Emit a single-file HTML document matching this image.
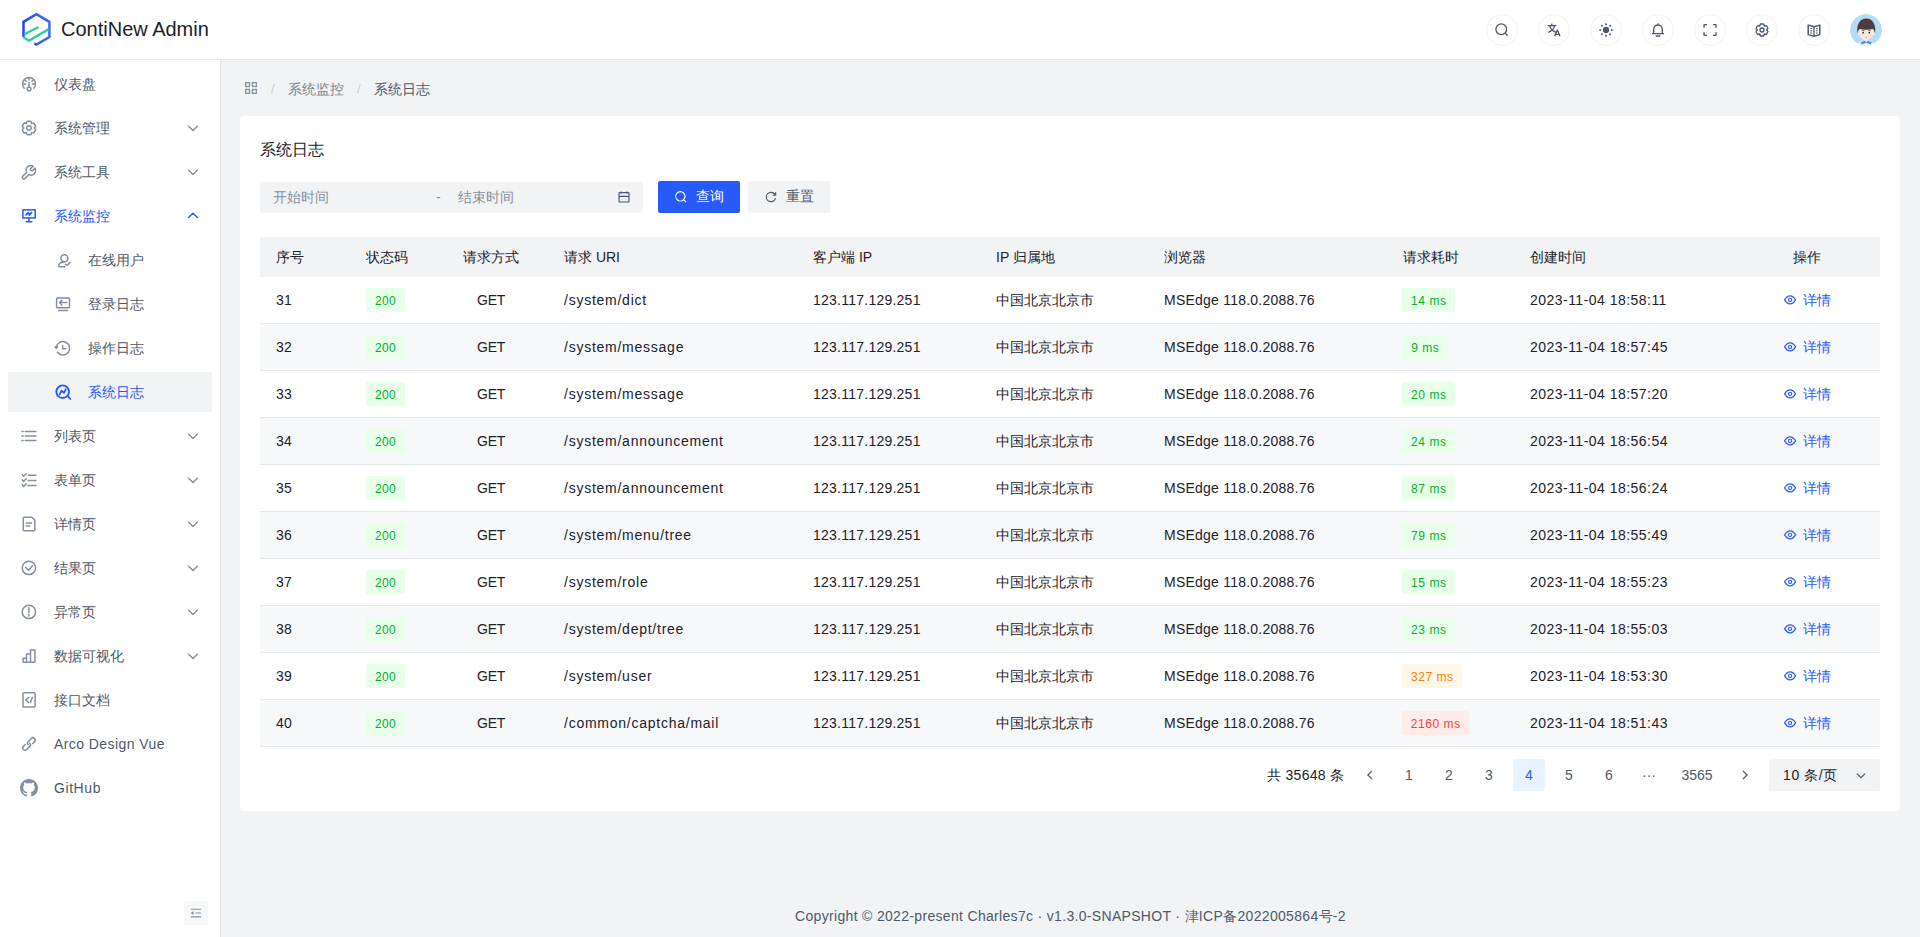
<!DOCTYPE html><html><head><meta charset="utf-8"><style>*{margin:0;padding:0;box-sizing:border-box}
html,body{width:1920px;height:937px;overflow:hidden;background:#f2f3f5;font-family:"Liberation Sans",sans-serif;font-size:14px;color:#1d2129}
.ic{display:inline-flex;font-style:normal}
svg{display:block}
.header{position:absolute;left:0;top:0;width:1920px;height:60px;background:#fff;border-bottom:1px solid #e5e6eb}
.logo{position:absolute;left:16px;top:8px}
.brand{position:absolute;left:61px;top:17px;font-size:20px;line-height:24px;color:#1d2129}
.nbtn{position:absolute;top:14px;width:32px;height:32px;border:1px solid #f2f3f5;border-radius:50%;display:flex;align-items:center;justify-content:center;color:#4e5969}
.avatar{position:absolute;left:1850px;top:14px;width:32px;height:32px;border-radius:50%;overflow:hidden}
.side{position:absolute;left:0;top:60px;width:221px;height:877px;background:#fff;border-right:1px solid #e5e6eb}
.mi{position:absolute;left:8px;width:204px;height:40px;color:#4e5969;border-radius:2px}
.mi .mic{position:absolute;left:6px;top:5px;color:#86909c}
.mi .mt{position:absolute;left:46px;top:0;line-height:40px}
.mi .arr{position:absolute;left:170px;top:5px;color:#86909c}
.mi.sub .mic{left:42px;top:5px}
.mi.sub .mt{left:80px}
.mi.act,.mi.act .mic,.mi.act .arr{color:#285afa}
.mi.sel{background:#f2f3f5}
.foldbtn{position:absolute;left:184px;top:841px;width:24px;height:24px;background:#f7f8fa;border-radius:2px;display:flex;align-items:center;justify-content:center;color:#86909c}
.main{position:absolute;left:221px;top:60px;width:1699px;height:877px}
.bc{position:absolute;left:0;top:0;width:100%;height:56px}
.bc .bci{position:absolute;left:24px;top:22px;color:#86909c}
.bc .sep{position:absolute;top:21px;line-height:16px;color:#c9cdd4;font-size:13px}
.bc .sep{margin-left:-221px}
.bc .bct{position:absolute;top:21px;line-height:16px;color:#7a8390;margin-left:-221px}
.bc .bct.cur{color:#4e5969}
.card{position:absolute;left:19px;top:56px;width:1660px;height:695px;background:#fff;border-radius:4px}
.ctitle{position:absolute;left:20px;top:23px;font-size:16px;line-height:22px;color:#1d2129}
.picker{position:absolute;left:20px;top:66px;width:383px;height:31px;background:#f2f3f5;border-radius:2px}
.picker .ph{position:absolute;top:-1px;line-height:32px;color:#86909c}
.picker .dash{position:absolute;left:176px;top:-1px;line-height:32px;color:#86909c}
.picker .calic{position:absolute;left:357px;top:8px;color:#4e5969}
.btn{position:absolute;top:65px;width:82px;height:32px;border-radius:2px;display:flex;align-items:center;justify-content:center;gap:8px}
.btn.pri{left:418px;background:#285afa;color:#fff}
.btn.sec{left:508px;background:#f2f3f5;color:#4e5969}
.tbl{position:absolute;left:20px;top:121px;width:1620px;height:510px}
.thead{position:absolute;left:0;top:0;width:1620px;height:40px;background:#f2f3f5}
.th{position:absolute;top:0;line-height:40px;color:#1d2129;white-space:nowrap}
.tr{position:absolute;left:0;width:1620px;height:47px;border-bottom:1px solid #e5e6eb;background:#fff}
.tr.st{background:#f7f8fa}
.td{position:absolute;top:0;line-height:46px;white-space:nowrap;color:#1d2129}
.td.get{text-align:center}
.tag{position:absolute;top:11px;height:24px;line-height:26px;padding:0;text-align:center;font-size:12px;border-radius:2px;white-space:nowrap}
.tag.ms{letter-spacing:0.55px;text-indent:0.55px}
.tag.g{background:#e8ffea;color:#00b42a}
.tag.o{background:#fff7e8;color:#ff7d00}
.tag.r{background:#ffece8;color:#f53f3f}
.td.op{color:#285afa;display:flex;align-items:center;height:46px}
.td.op svg{margin-right:5px}
.td.op b{font-weight:normal}
.pg{position:absolute;left:0;top:0;width:100%;height:100%;margin-left:-240px}
.pg .total{position:absolute;left:1267px;top:643px;line-height:32px;color:#1d2129}
.pi{position:absolute;top:643px;height:32px;line-height:32px;text-align:center;color:#4e5969;border-radius:2px;width:32px;display:flex;align-items:center;justify-content:center}
.pi.on{background:#e8f3ff;color:#285afa}
.psel{position:absolute;left:1769px;top:643px;width:111px;height:32px;background:#f2f3f5;border-radius:2px;color:#1d2129}
.psel .pst{position:absolute;left:14px;top:0;line-height:32px;letter-spacing:0.6px}
.psel .psa{position:absolute;left:86px;top:11px;color:#4e5969}
.foot{position:absolute;left:0;top:845px;width:1699px;text-align:center;line-height:22px;color:#4e5969}

.td.uri{letter-spacing:0.75px}
.td.ip{letter-spacing:0.24px}
.td.br{letter-spacing:0.23px}
.td.dt{letter-spacing:0.47px}
.td.get{letter-spacing:-0.3px}
.foot{letter-spacing:0.32px}
.pg .total{letter-spacing:0.3px}

</style></head><body>
<div class="header">
<svg class="logo" width="44" height="44" viewBox="16 8 44 44"><defs><linearGradient id="lg" x1="0" y1="0" x2="1" y2="0"><stop offset="0" stop-color="#1f48fb"/><stop offset="1" stop-color="#3b6ef3"/></linearGradient></defs><polyline points="34.3,43.4 36.45,44.6 49.4,37.0 49.4,21.8 36.45,14.2 23.5,21.8 23.5,37.0" fill="none" stroke="url(#lg)" stroke-width="2.5" stroke-linejoin="miter"/><polyline points="23.3,37.3 29.1,40.6 48.4,29.4" fill="none" stroke="#2ecfa5" stroke-width="2.4"/><line x1="24.4" y1="34.2" x2="38.4" y2="27.1" stroke="#2ecfa5" stroke-width="2.4"/></svg>
<div class="brand">ContiNew Admin</div>
<div class="nbtn" style="left:1486px"><svg width="16" height="16" viewBox="0 0 48 48" fill="none" stroke="currentColor" stroke-width="4" ><path d="M33.072 33.071c6.248-6.248 6.248-16.379 0-22.627-6.249-6.249-16.38-6.249-22.628 0-6.248 6.248-6.248 16.379 0 22.627 6.248 6.248 16.38 6.248 22.628 0Zm0 0 8.485 8.485"/></svg></div>
<div class="nbtn" style="left:1538px"><svg width="16" height="16" viewBox="0 0 48 48" fill="none" stroke="currentColor" stroke-width="4" ><path d="m42 43-2.385-6M26 43l2.384-6m11.231 0-.795-2-4.18-10h-1.28l-4.181 10-.795 2m11.231 0h-11.23M17 5l1 5M5 11h26M11 11s1.889 7.826 6.611 12.174C22.333 27.522 30 31 30 31"/><path d="M25.914 11s-1.889 7.826-6.611 12.174C14.58 27.522 6.914 31 6.914 31"/></svg></div>
<div class="nbtn" style="left:1590px"><svg width="16" height="16" viewBox="0 0 48 48" fill="none" stroke="currentColor" stroke-width="4" ><circle cx="24" cy="24" r="9.5" fill="currentColor" stroke="none"/><g fill="currentColor" stroke="none"><circle cx="24" cy="6.5" r="3"/><circle cx="24" cy="41.5" r="3"/><circle cx="6.5" cy="24" r="3"/><circle cx="41.5" cy="24" r="3"/><circle cx="11.6" cy="11.6" r="3"/><circle cx="36.4" cy="36.4" r="3"/><circle cx="36.4" cy="11.6" r="3"/><circle cx="11.6" cy="36.4" r="3"/></g></svg></div>
<div class="nbtn" style="left:1642px"><svg width="16" height="16" viewBox="0 0 48 48" fill="none" stroke="currentColor" stroke-width="4" ><path d="M24 9c7.18 0 13 5.82 13 13v13H11V22c0-7.18 5.82-13 13-13Zm0 0V4M6 35h36m-25 7h14"/></svg></div>
<div class="nbtn" style="left:1694px"><svg width="16" height="16" viewBox="0 0 48 48" fill="none" stroke="currentColor" stroke-width="4" ><path d="M42 17V9a1 1 0 0 0-1-1h-8M6 17V9a1 1 0 0 1 1-1h8m27 23v8a1 1 0 0 1-1 1h-8M6 31v8a1 1 0 0 0 1 1h8"/></svg></div>
<div class="nbtn" style="left:1746px"><svg width="16" height="16" viewBox="0 0 48 48" fill="none" stroke="currentColor" stroke-width="4" ><path d="M18.797 6.732A1 1 0 0 1 19.76 6h8.48a1 1 0 0 1 .964.732l1.285 4.628a1 1 0 0 0 1.213.7l4.651-1.2a1 1 0 0 1 1.116.468l4.24 7.344a1 1 0 0 1-.153 1.2L38.193 23.3a1 1 0 0 0 0 1.402l3.364 3.427a1 1 0 0 1 .153 1.2l-4.24 7.344a1 1 0 0 1-1.116.468l-4.65-1.2a1 1 0 0 0-1.214.7l-1.285 4.628a1 1 0 0 1-.964.732h-8.48a1 1 0 0 1-.963-.732L17.51 36.64a1 1 0 0 0-1.213-.7l-4.65 1.2a1 1 0 0 1-1.116-.468l-4.24-7.344a1 1 0 0 1 .153-1.2L9.809 24.7a1 1 0 0 0 0-1.402l-3.364-3.427a1 1 0 0 1-.153-1.2l4.24-7.344a1 1 0 0 1 1.116-.468l4.65 1.2a1 1 0 0 0 1.213-.7l1.286-4.628Z"/><path d="M30 24a6 6 0 1 1-12 0 6 6 0 0 1 12 0Z"/></svg></div>
<div class="nbtn" style="left:1798px"><svg width="16" height="16" viewBox="0 0 16 16" fill="none" stroke="currentColor" stroke-width="1.5" stroke-linejoin="round"><path d="M2.2 3.1 8 4.8 13.8 3.1V12.6L8 14.2 2.2 12.6Z"/><path d="M8 4.8V14.2" stroke-width="1.3"/><path d="M4.3 6.6H6M4.3 8.8H6M4.3 11H6M10 6.6H11.7M10 8.8H11.7M10 11H11.7" stroke-width="1"/></svg></div>
<div class="avatar"><svg width="32" height="32" viewBox="0 0 32 32"><circle cx="16" cy="16" r="16" fill="#b3dcf8"/><path d="M5 32Q7 27.5 16.25 27.5Q25.5 27.5 27.5 32Z" fill="#eaf5fd"/><rect x="14.3" y="23.5" width="3.9" height="5" fill="#fbe3d5"/><path d="M10.5 28.6 15 26.7 16.25 28.6 17.5 26.7 22 28.6 20.6 30.4 16.25 28.8 11.9 30.4Z" fill="#4a8ff0"/><circle cx="8.9" cy="19.8" r="1.3" fill="#fbe3d5"/><circle cx="23.6" cy="19.8" r="1.3" fill="#fbe3d5"/><ellipse cx="16.25" cy="18" rx="7.4" ry="8.3" fill="#fde9de"/><path d="M7.4 19.5C6.2 10.5 10 4.5 16.25 4.5 22.5 4.5 26.3 10.5 25.1 19.5 24.5 17 24 15.8 23.1 15.1 19.5 16.1 13 16.1 9.4 15.1 8.6 15.8 8 17 7.4 19.5Z" fill="#4e3b3f"/><path d="M11.8 16.6h2.6M18.1 16.6h2.6" stroke="#4e3b3f" stroke-width="0.7"/><circle cx="13.2" cy="18.7" r="0.85" fill="#3a2a2a"/><circle cx="19.3" cy="18.7" r="0.85" fill="#3a2a2a"/><circle cx="11.9" cy="21" r="1.1" fill="#f9d2d0"/><circle cx="20.6" cy="21" r="1.1" fill="#f9d2d0"/><ellipse cx="16.25" cy="23.2" rx="0.9" ry="0.55" fill="#ee8b8b"/></svg></div>
</div>
<div class="side">
<div class="mi" style="top:4px">
<i class="ic mic"><svg width="30" height="30" viewBox="0 0 30 30" fill="none" stroke="currentColor" stroke-width="1.5" stroke-linecap="round" stroke-linejoin="round"><path d="M10.2 19.3A6.5 6.5 0 1 1 19.8 19.3"/><path d="M15 8.6v2.2M9.3 15.1h2.4M18.4 15h2.4M10.6 10.9l1.5 1.4M19.4 10.9l-1.5 1.4M15 13.2v4.8"/><circle cx="15" cy="19.9" r="1.9"/></svg></i>
<span class="mt" style="letter-spacing:0px">仪表盘</span>
</div>
<div class="mi" style="top:48px">
<i class="ic mic"><svg width="30" height="30" viewBox="0 0 30 30" fill="none" stroke="currentColor" stroke-width="1.5" stroke-linecap="round" stroke-linejoin="round"><g transform="translate(6 6) scale(0.375)" stroke-width="4"><path d="M18.797 6.732A1 1 0 0 1 19.76 6h8.48a1 1 0 0 1 .964.732l1.285 4.628a1 1 0 0 0 1.213.7l4.651-1.2a1 1 0 0 1 1.116.468l4.24 7.344a1 1 0 0 1-.153 1.2L38.193 23.3a1 1 0 0 0 0 1.402l3.364 3.427a1 1 0 0 1 .153 1.2l-4.24 7.344a1 1 0 0 1-1.116.468l-4.65-1.2a1 1 0 0 0-1.214.7l-1.285 4.628a1 1 0 0 1-.964.732h-8.48a1 1 0 0 1-.963-.732L17.51 36.64a1 1 0 0 0-1.213-.7l-4.65 1.2a1 1 0 0 1-1.116-.468l-4.24-7.344a1 1 0 0 1 .153-1.2L9.809 24.7a1 1 0 0 0 0-1.402l-3.364-3.427a1 1 0 0 1-.153-1.2l4.24-7.344a1 1 0 0 1 1.116-.468l4.65 1.2a1 1 0 0 0 1.213-.7l1.286-4.628Z"/><path d="M30 24a6 6 0 1 1-12 0 6 6 0 0 1 12 0Z"/></g></svg></i>
<span class="mt" style="letter-spacing:0px">系统管理</span>
<i class="ic arr"><svg width="30" height="30" viewBox="0 0 30 30" fill="none" stroke="currentColor" stroke-width="1.4" stroke-linecap="round" stroke-linejoin="round"><path d="M10.6 13.3 14.9 17.4 19.4 13.3"/></svg></i>
</div>
<div class="mi" style="top:92px">
<i class="ic mic"><svg width="30" height="30" viewBox="0 0 30 30" fill="none" stroke="currentColor" stroke-width="1.5" stroke-linecap="round" stroke-linejoin="round"><path d="M19.2 9.1C16.8 7.9 13.6 8.8 12.5 11.3 11.9 12.7 12 14.1 12.7 15.3L8.6 19.4C8.1 19.9 8.1 20.6 8.6 21.1L9.1 21.6C9.6 22.1 10.3 22.1 10.8 21.6L14.9 17.5C16 18.2 17.5 18.4 18.9 17.8 21.4 16.8 22.3 13.6 21.1 11.1L18.8 13.4C18.3 13.9 17.6 13.9 17.1 13.4L16.8 13.1C16.3 12.6 16.3 11.9 16.8 11.4Z"/></svg></i>
<span class="mt" style="letter-spacing:0px">系统工具</span>
<i class="ic arr"><svg width="30" height="30" viewBox="0 0 30 30" fill="none" stroke="currentColor" stroke-width="1.4" stroke-linecap="round" stroke-linejoin="round"><path d="M10.6 13.3 14.9 17.4 19.4 13.3"/></svg></i>
</div>
<div class="mi act" style="top:136px">
<i class="ic mic"><svg width="30" height="30" viewBox="0 0 30 30" fill="none" stroke="currentColor" stroke-width="1.5" stroke-linecap="round" stroke-linejoin="round"><rect x="8.9" y="8.9" width="12.3" height="8" stroke-linejoin="miter"/><path d="M14.9 17.2V20.6M12.2 20.8H17.9"/><path d="M12 13.9 14.2 11.6 15.5 14 17.6 11.6" stroke-width="1.7"/></svg></i>
<span class="mt" style="letter-spacing:0px">系统监控</span>
<i class="ic arr"><svg width="30" height="30" viewBox="0 0 30 30" fill="none" stroke="currentColor" stroke-width="1.4" stroke-linecap="round" stroke-linejoin="round"><path d="M10.6 16.5 14.9 12.3 19.4 16.5"/></svg></i>
</div>
<div class="mi sub" style="top:180px">
<i class="ic mic"><svg width="30" height="30" viewBox="0 0 30 30" fill="none" stroke="currentColor" stroke-width="1.5" stroke-linecap="round" stroke-linejoin="round"><circle cx="14.4" cy="13.2" r="3.5"/><path d="M14.8 21.7H10.1Q8.6 21.7 8.8 20.4Q9.4 17.3 14.2 17.1M15.4 19.2 17 20.5 19.9 17.6"/></svg></i>
<span class="mt" style="letter-spacing:0px">在线用户</span>
</div>
<div class="mi sub" style="top:224px">
<i class="ic mic"><svg width="30" height="30" viewBox="0 0 30 30" fill="none" stroke="currentColor" stroke-width="1.5" stroke-linecap="round" stroke-linejoin="round"><rect x="6.6" y="8.9" width="12.9" height="9.8" rx="0.8"/><path d="M8.5 21.5H17.5M9.6 13.6H16.8M11.8 11.4 9.5 13.6 11.8 16"/></svg></i>
<span class="mt" style="letter-spacing:0px">登录日志</span>
</div>
<div class="mi sub" style="top:268px">
<i class="ic mic"><svg width="30" height="30" viewBox="0 0 30 30" fill="none" stroke="currentColor" stroke-width="1.5" stroke-linecap="round" stroke-linejoin="round"><path d="M7.5 19.3A6.7 6.7 0 1 0 6.3 14.3"/><path d="M5.2 13.7 6.3 15.2 7.7 14M12.6 12.6V15.8H15.7"/></svg></i>
<span class="mt" style="letter-spacing:0px">操作日志</span>
</div>
<div class="mi sub act sel" style="top:312px">
<i class="ic mic"><svg width="30" height="30" viewBox="0 0 30 30" fill="none" stroke="currentColor" stroke-width="1.5" stroke-linecap="round" stroke-linejoin="round"><circle cx="12.65" cy="14.7" r="6.3" stroke-width="1.9"/><path d="M17.6 19.2 20.3 21.9M9.6 17.4 11.5 13.6 14.1 15.8 15.7 12.3" stroke-width="1.8"/></svg></i>
<span class="mt" style="letter-spacing:0px">系统日志</span>
</div>
<div class="mi" style="top:356px">
<i class="ic mic"><svg width="30" height="30" viewBox="0 0 30 30" fill="none" stroke="currentColor" stroke-width="1.5" stroke-linecap="round" stroke-linejoin="round"><path d="M11.2 10.4H21.9M11.2 14.9H21.9M11.2 19.4H21.9M7.9 10.4H9.2M7.9 14.9H9.2M7.9 19.4H9.2"/></svg></i>
<span class="mt" style="letter-spacing:0px">列表页</span>
<i class="ic arr"><svg width="30" height="30" viewBox="0 0 30 30" fill="none" stroke="currentColor" stroke-width="1.4" stroke-linecap="round" stroke-linejoin="round"><path d="M10.6 13.3 14.9 17.4 19.4 13.3"/></svg></i>
</div>
<div class="mi" style="top:400px">
<i class="ic mic"><svg width="30" height="30" viewBox="0 0 30 30" fill="none" stroke="currentColor" stroke-width="1.5" stroke-linecap="round" stroke-linejoin="round"><path d="M14.1 10.2H21.9M14.1 15.4H21.9M14.1 20.6H21.9M8.2 9.6 9.6 11.2 12.3 8.7M8.2 14.7 9.6 16.3 12.3 13.8M8.2 19.8 9.6 21.4 12.3 18.9"/></svg></i>
<span class="mt" style="letter-spacing:0px">表单页</span>
<i class="ic arr"><svg width="30" height="30" viewBox="0 0 30 30" fill="none" stroke="currentColor" stroke-width="1.4" stroke-linecap="round" stroke-linejoin="round"><path d="M10.6 13.3 14.9 17.4 19.4 13.3"/></svg></i>
</div>
<div class="mi" style="top:444px">
<i class="ic mic"><svg width="30" height="30" viewBox="0 0 30 30" fill="none" stroke="currentColor" stroke-width="1.5" stroke-linecap="round" stroke-linejoin="round"><path d="M10.3 8.3H17.9L20.8 11.1V20.8A1 1 0 0 1 19.8 21.8H10.3A1 1 0 0 1 9.3 20.8V9.3A1 1 0 0 1 10.3 8.3Z"/><path d="M12.3 13.9H17.6M12.3 17H15.7"/></svg></i>
<span class="mt" style="letter-spacing:0px">详情页</span>
<i class="ic arr"><svg width="30" height="30" viewBox="0 0 30 30" fill="none" stroke="currentColor" stroke-width="1.4" stroke-linecap="round" stroke-linejoin="round"><path d="M10.6 13.3 14.9 17.4 19.4 13.3"/></svg></i>
</div>
<div class="mi" style="top:488px">
<i class="ic mic"><svg width="30" height="30" viewBox="0 0 30 30" fill="none" stroke="currentColor" stroke-width="1.5" stroke-linecap="round" stroke-linejoin="round"><circle cx="14.9" cy="14.9" r="6.7"/><path d="M11.5 14.2 14.4 17.2 18.6 12.6"/></svg></i>
<span class="mt" style="letter-spacing:0px">结果页</span>
<i class="ic arr"><svg width="30" height="30" viewBox="0 0 30 30" fill="none" stroke="currentColor" stroke-width="1.4" stroke-linecap="round" stroke-linejoin="round"><path d="M10.6 13.3 14.9 17.4 19.4 13.3"/></svg></i>
</div>
<div class="mi" style="top:532px">
<i class="ic mic"><svg width="30" height="30" viewBox="0 0 30 30" fill="none" stroke="currentColor" stroke-width="1.5" stroke-linecap="round" stroke-linejoin="round"><circle cx="14.9" cy="14.9" r="6.7"/><path d="M14.9 10.8V15.6M14.9 17.4V19"/></svg></i>
<span class="mt" style="letter-spacing:0px">异常页</span>
<i class="ic arr"><svg width="30" height="30" viewBox="0 0 30 30" fill="none" stroke="currentColor" stroke-width="1.4" stroke-linecap="round" stroke-linejoin="round"><path d="M10.6 13.3 14.9 17.4 19.4 13.3"/></svg></i>
</div>
<div class="mi" style="top:576px">
<i class="ic mic"><svg width="30" height="30" viewBox="0 0 30 30" fill="none" stroke="currentColor" stroke-width="1.5" stroke-linecap="round" stroke-linejoin="round"><path d="M9.1 21.2H20.9V8.9H16.5V21.2M16.5 13.1H12.5V21.2M12.5 17.2H9.1V21.2"/></svg></i>
<span class="mt" style="letter-spacing:0px">数据可视化</span>
<i class="ic arr"><svg width="30" height="30" viewBox="0 0 30 30" fill="none" stroke="currentColor" stroke-width="1.4" stroke-linecap="round" stroke-linejoin="round"><path d="M10.6 13.3 14.9 17.4 19.4 13.3"/></svg></i>
</div>
<div class="mi" style="top:620px">
<i class="ic mic"><svg width="30" height="30" viewBox="0 0 30 30" fill="none" stroke="currentColor" stroke-width="1.5" stroke-linecap="round" stroke-linejoin="round"><rect x="9" y="7.8" width="12.1" height="14.3" rx="0.8"/><path d="M14.6 12.5 11.7 14.9 14.6 17.5M18.3 12.5 16.5 17.5"/></svg></i>
<span class="mt" style="letter-spacing:0px">接口文档</span>
</div>
<div class="mi" style="top:664px">
<i class="ic mic"><svg width="30" height="30" viewBox="0 0 30 30" fill="none" stroke="currentColor" stroke-width="1.5" stroke-linecap="round" stroke-linejoin="round"><g transform="translate(6 6) scale(0.375)" stroke-width="4"><path d="m14.1 25.414-4.95 4.95a6 6 0 0 0 8.486 8.485l8.485-8.485a6 6 0 0 0 0-8.485m7.779.707 4.95-4.95a6 6 0 1 0-8.486-8.485l-8.485 8.485a6 6 0 0 0 0 8.485"/></g></svg></i>
<span class="mt" style="letter-spacing:0.43px">Arco Design Vue</span>
</div>
<div class="mi" style="top:708px">
<i class="ic mic"><svg width="30" height="30" viewBox="0 0 30 30" fill="currentColor"><g transform="translate(6 5.9) scale(1.125)"><path d="M8 0C3.58 0 0 3.58 0 8c0 3.54 2.29 6.53 5.47 7.59.4.07.55-.17.55-.38 0-.19-.01-.82-.01-1.49-2.01.37-2.53-.49-2.69-.94-.09-.23-.48-.94-.82-1.13-.28-.15-.68-.52-.01-.53.63-.01 1.08.58 1.23.82.72 1.21 1.87.87 2.33.66.07-.52.28-.87.51-1.07-1.78-.2-3.64-.89-3.64-3.95 0-.87.31-1.59.82-2.15-.08-.2-.36-1.02.08-2.12 0 0 .67-.21 2.2.82.64-.18 1.32-.27 2-.27.68 0 1.36.09 2 .27 1.53-1.04 2.2-.82 2.2-.82.44 1.1.16 1.92.08 2.12.51.56.82 1.27.82 2.15 0 3.07-1.87 3.75-3.65 3.95.29.25.54.73.54 1.48 0 1.07-.01 1.93-.01 2.2 0 .21.15.46.55.38A8.013 8.013 0 0016 8c0-4.42-3.58-8-8-8z"/></g></svg></i>
<span class="mt" style="letter-spacing:0.57px">GitHub</span>
</div>
<div class="foldbtn"><svg width="14" height="14" viewBox="0 0 48 48" fill="none" stroke="currentColor" stroke-width="4" ><path d="M42 11H6M42 24H22M42 37H6M13.66 26.912l-4.82-3.118 4.82-3.118v6.236Z"/></svg></div>
</div>
<div class="main">
<div class="bc"><i class="ic bci"><svg width="12" height="12" viewBox="0 0 12 12" fill="none" stroke="currentColor" stroke-width="1.3"><rect x="0.65" y="0.65" width="3.9" height="3.9"/><rect x="7.45" y="0.65" width="3.9" height="3.9"/><rect x="0.65" y="7.45" width="3.9" height="3.9"/><rect x="7.45" y="7.45" width="3.9" height="3.9"/></svg></i><span class="sep" style="left:271px">/</span><span class="bct" style="left:288px">系统监控</span><span class="sep" style="left:357px">/</span><span class="bct cur" style="left:374px">系统日志</span></div>
<div class="card">
<div class="ctitle">系统日志</div>
<div class="picker"><span class="ph" style="left:13px">开始时间</span><span class="dash">-</span><span class="ph" style="left:198px">结束时间</span><i class="ic calic"><svg width="14" height="14" viewBox="0 0 48 48" fill="none" stroke="currentColor" stroke-width="4" ><path d="M7 22h34M14 5v8m20-8v8M8 41h32a1 1 0 0 0 1-1V10a1 1 0 0 0-1-1H8a1 1 0 0 0-1 1v30a1 1 0 0 0 1 1Z"/></svg></i></div>
<div class="btn pri"><svg width="14" height="14" viewBox="0 0 48 48" fill="none" stroke="currentColor" stroke-width="4" ><path d="M33.072 33.071c6.248-6.248 6.248-16.379 0-22.627-6.249-6.249-16.38-6.249-22.628 0-6.248 6.248-6.248 16.379 0 22.627 6.248 6.248 16.38 6.248 22.628 0Zm0 0 8.485 8.485"/></svg><span>查询</span></div>
<div class="btn sec"><svg width="14" height="14" viewBox="0 0 48 48" fill="none" stroke="currentColor" stroke-width="4" ><path d="M38.837 18C36.463 12.136 30.715 8 24 8 15.163 8 8 15.163 8 24s7.163 16 16 16c7.455 0 13.72-5.1 15.496-12M40 8v10H30"/></svg><span>重置</span></div>
<div class="tbl">
<div class="thead">
<span class="th" style="left:16px">序号</span>
<span class="th" style="left:106px">状态码</span>
<span class="th" style="left:203px">请求方式</span>
<span class="th" style="left:304px">请求 URI</span>
<span class="th" style="left:553px">客户端 IP</span>
<span class="th" style="left:736px">IP 归属地</span>
<span class="th" style="left:904px">浏览器</span>
<span class="th" style="left:1143px">请求耗时</span>
<span class="th" style="left:1270px">创建时间</span>
<span class="th" style="left:1533px">操作</span>
</div>
<div class="tr" style="top:40px">
<span class="td" style="left:16px;letter-spacing:0.3px">31</span>
<span class="tag g" style="left:106px;width:39px;letter-spacing:0.3px">200</span>
<span class="td get" style="left:180px;width:102px">GET</span>
<span class="td uri" style="left:304px">/system/dict</span>
<span class="td ip" style="left:553px">123.117.129.251</span>
<span class="td" style="left:736px">中国北京北京市</span>
<span class="td br" style="left:904px">MSEdge 118.0.2088.76</span>
<span class="tag g ms" style="left:1142px;width:53px">14 ms</span>
<span class="td dt" style="left:1270px">2023-11-04 18:58:11</span>
<span class="td op" style="left:1522px"><svg width="16" height="16" viewBox="0 0 16 16" fill="none" stroke="currentColor" stroke-width="1.2"><path d="M2.6 7.9C4.3 5 6 3.95 8.1 3.95 10.2 3.95 11.9 5 13.6 7.9 11.9 10.8 10.2 11.85 8.1 11.85 6 11.85 4.3 10.8 2.6 7.9Z"/><circle cx="8.1" cy="7.9" r="1.6" stroke-width="1.1"/></svg><b>详情</b></span>
</div>
<div class="tr st" style="top:87px">
<span class="td" style="left:16px;letter-spacing:0.3px">32</span>
<span class="tag g" style="left:106px;width:39px;letter-spacing:0.3px">200</span>
<span class="td get" style="left:180px;width:102px">GET</span>
<span class="td uri" style="left:304px">/system/message</span>
<span class="td ip" style="left:553px">123.117.129.251</span>
<span class="td" style="left:736px">中国北京北京市</span>
<span class="td br" style="left:904px">MSEdge 118.0.2088.76</span>
<span class="tag g ms" style="left:1142px;width:46px">9 ms</span>
<span class="td dt" style="left:1270px">2023-11-04 18:57:45</span>
<span class="td op" style="left:1522px"><svg width="16" height="16" viewBox="0 0 16 16" fill="none" stroke="currentColor" stroke-width="1.2"><path d="M2.6 7.9C4.3 5 6 3.95 8.1 3.95 10.2 3.95 11.9 5 13.6 7.9 11.9 10.8 10.2 11.85 8.1 11.85 6 11.85 4.3 10.8 2.6 7.9Z"/><circle cx="8.1" cy="7.9" r="1.6" stroke-width="1.1"/></svg><b>详情</b></span>
</div>
<div class="tr" style="top:134px">
<span class="td" style="left:16px;letter-spacing:0.3px">33</span>
<span class="tag g" style="left:106px;width:39px;letter-spacing:0.3px">200</span>
<span class="td get" style="left:180px;width:102px">GET</span>
<span class="td uri" style="left:304px">/system/message</span>
<span class="td ip" style="left:553px">123.117.129.251</span>
<span class="td" style="left:736px">中国北京北京市</span>
<span class="td br" style="left:904px">MSEdge 118.0.2088.76</span>
<span class="tag g ms" style="left:1142px;width:53px">20 ms</span>
<span class="td dt" style="left:1270px">2023-11-04 18:57:20</span>
<span class="td op" style="left:1522px"><svg width="16" height="16" viewBox="0 0 16 16" fill="none" stroke="currentColor" stroke-width="1.2"><path d="M2.6 7.9C4.3 5 6 3.95 8.1 3.95 10.2 3.95 11.9 5 13.6 7.9 11.9 10.8 10.2 11.85 8.1 11.85 6 11.85 4.3 10.8 2.6 7.9Z"/><circle cx="8.1" cy="7.9" r="1.6" stroke-width="1.1"/></svg><b>详情</b></span>
</div>
<div class="tr st" style="top:181px">
<span class="td" style="left:16px;letter-spacing:0.3px">34</span>
<span class="tag g" style="left:106px;width:39px;letter-spacing:0.3px">200</span>
<span class="td get" style="left:180px;width:102px">GET</span>
<span class="td uri" style="left:304px">/system/announcement</span>
<span class="td ip" style="left:553px">123.117.129.251</span>
<span class="td" style="left:736px">中国北京北京市</span>
<span class="td br" style="left:904px">MSEdge 118.0.2088.76</span>
<span class="tag g ms" style="left:1142px;width:53px">24 ms</span>
<span class="td dt" style="left:1270px">2023-11-04 18:56:54</span>
<span class="td op" style="left:1522px"><svg width="16" height="16" viewBox="0 0 16 16" fill="none" stroke="currentColor" stroke-width="1.2"><path d="M2.6 7.9C4.3 5 6 3.95 8.1 3.95 10.2 3.95 11.9 5 13.6 7.9 11.9 10.8 10.2 11.85 8.1 11.85 6 11.85 4.3 10.8 2.6 7.9Z"/><circle cx="8.1" cy="7.9" r="1.6" stroke-width="1.1"/></svg><b>详情</b></span>
</div>
<div class="tr" style="top:228px">
<span class="td" style="left:16px;letter-spacing:0.3px">35</span>
<span class="tag g" style="left:106px;width:39px;letter-spacing:0.3px">200</span>
<span class="td get" style="left:180px;width:102px">GET</span>
<span class="td uri" style="left:304px">/system/announcement</span>
<span class="td ip" style="left:553px">123.117.129.251</span>
<span class="td" style="left:736px">中国北京北京市</span>
<span class="td br" style="left:904px">MSEdge 118.0.2088.76</span>
<span class="tag g ms" style="left:1142px;width:53px">87 ms</span>
<span class="td dt" style="left:1270px">2023-11-04 18:56:24</span>
<span class="td op" style="left:1522px"><svg width="16" height="16" viewBox="0 0 16 16" fill="none" stroke="currentColor" stroke-width="1.2"><path d="M2.6 7.9C4.3 5 6 3.95 8.1 3.95 10.2 3.95 11.9 5 13.6 7.9 11.9 10.8 10.2 11.85 8.1 11.85 6 11.85 4.3 10.8 2.6 7.9Z"/><circle cx="8.1" cy="7.9" r="1.6" stroke-width="1.1"/></svg><b>详情</b></span>
</div>
<div class="tr st" style="top:275px">
<span class="td" style="left:16px;letter-spacing:0.3px">36</span>
<span class="tag g" style="left:106px;width:39px;letter-spacing:0.3px">200</span>
<span class="td get" style="left:180px;width:102px">GET</span>
<span class="td uri" style="left:304px">/system/menu/tree</span>
<span class="td ip" style="left:553px">123.117.129.251</span>
<span class="td" style="left:736px">中国北京北京市</span>
<span class="td br" style="left:904px">MSEdge 118.0.2088.76</span>
<span class="tag g ms" style="left:1142px;width:53px">79 ms</span>
<span class="td dt" style="left:1270px">2023-11-04 18:55:49</span>
<span class="td op" style="left:1522px"><svg width="16" height="16" viewBox="0 0 16 16" fill="none" stroke="currentColor" stroke-width="1.2"><path d="M2.6 7.9C4.3 5 6 3.95 8.1 3.95 10.2 3.95 11.9 5 13.6 7.9 11.9 10.8 10.2 11.85 8.1 11.85 6 11.85 4.3 10.8 2.6 7.9Z"/><circle cx="8.1" cy="7.9" r="1.6" stroke-width="1.1"/></svg><b>详情</b></span>
</div>
<div class="tr" style="top:322px">
<span class="td" style="left:16px;letter-spacing:0.3px">37</span>
<span class="tag g" style="left:106px;width:39px;letter-spacing:0.3px">200</span>
<span class="td get" style="left:180px;width:102px">GET</span>
<span class="td uri" style="left:304px">/system/role</span>
<span class="td ip" style="left:553px">123.117.129.251</span>
<span class="td" style="left:736px">中国北京北京市</span>
<span class="td br" style="left:904px">MSEdge 118.0.2088.76</span>
<span class="tag g ms" style="left:1142px;width:53px">15 ms</span>
<span class="td dt" style="left:1270px">2023-11-04 18:55:23</span>
<span class="td op" style="left:1522px"><svg width="16" height="16" viewBox="0 0 16 16" fill="none" stroke="currentColor" stroke-width="1.2"><path d="M2.6 7.9C4.3 5 6 3.95 8.1 3.95 10.2 3.95 11.9 5 13.6 7.9 11.9 10.8 10.2 11.85 8.1 11.85 6 11.85 4.3 10.8 2.6 7.9Z"/><circle cx="8.1" cy="7.9" r="1.6" stroke-width="1.1"/></svg><b>详情</b></span>
</div>
<div class="tr st" style="top:369px">
<span class="td" style="left:16px;letter-spacing:0.3px">38</span>
<span class="tag g" style="left:106px;width:39px;letter-spacing:0.3px">200</span>
<span class="td get" style="left:180px;width:102px">GET</span>
<span class="td uri" style="left:304px">/system/dept/tree</span>
<span class="td ip" style="left:553px">123.117.129.251</span>
<span class="td" style="left:736px">中国北京北京市</span>
<span class="td br" style="left:904px">MSEdge 118.0.2088.76</span>
<span class="tag g ms" style="left:1142px;width:53px">23 ms</span>
<span class="td dt" style="left:1270px">2023-11-04 18:55:03</span>
<span class="td op" style="left:1522px"><svg width="16" height="16" viewBox="0 0 16 16" fill="none" stroke="currentColor" stroke-width="1.2"><path d="M2.6 7.9C4.3 5 6 3.95 8.1 3.95 10.2 3.95 11.9 5 13.6 7.9 11.9 10.8 10.2 11.85 8.1 11.85 6 11.85 4.3 10.8 2.6 7.9Z"/><circle cx="8.1" cy="7.9" r="1.6" stroke-width="1.1"/></svg><b>详情</b></span>
</div>
<div class="tr" style="top:416px">
<span class="td" style="left:16px;letter-spacing:0.3px">39</span>
<span class="tag g" style="left:106px;width:39px;letter-spacing:0.3px">200</span>
<span class="td get" style="left:180px;width:102px">GET</span>
<span class="td uri" style="left:304px">/system/user</span>
<span class="td ip" style="left:553px">123.117.129.251</span>
<span class="td" style="left:736px">中国北京北京市</span>
<span class="td br" style="left:904px">MSEdge 118.0.2088.76</span>
<span class="tag o ms" style="left:1142px;width:60px">327 ms</span>
<span class="td dt" style="left:1270px">2023-11-04 18:53:30</span>
<span class="td op" style="left:1522px"><svg width="16" height="16" viewBox="0 0 16 16" fill="none" stroke="currentColor" stroke-width="1.2"><path d="M2.6 7.9C4.3 5 6 3.95 8.1 3.95 10.2 3.95 11.9 5 13.6 7.9 11.9 10.8 10.2 11.85 8.1 11.85 6 11.85 4.3 10.8 2.6 7.9Z"/><circle cx="8.1" cy="7.9" r="1.6" stroke-width="1.1"/></svg><b>详情</b></span>
</div>
<div class="tr st" style="top:463px">
<span class="td" style="left:16px;letter-spacing:0.3px">40</span>
<span class="tag g" style="left:106px;width:39px;letter-spacing:0.3px">200</span>
<span class="td get" style="left:180px;width:102px">GET</span>
<span class="td uri" style="left:304px">/common/captcha/mail</span>
<span class="td ip" style="left:553px">123.117.129.251</span>
<span class="td" style="left:736px">中国北京北京市</span>
<span class="td br" style="left:904px">MSEdge 118.0.2088.76</span>
<span class="tag r ms" style="left:1142px;width:67px">2160 ms</span>
<span class="td dt" style="left:1270px">2023-11-04 18:51:43</span>
<span class="td op" style="left:1522px"><svg width="16" height="16" viewBox="0 0 16 16" fill="none" stroke="currentColor" stroke-width="1.2"><path d="M2.6 7.9C4.3 5 6 3.95 8.1 3.95 10.2 3.95 11.9 5 13.6 7.9 11.9 10.8 10.2 11.85 8.1 11.85 6 11.85 4.3 10.8 2.6 7.9Z"/><circle cx="8.1" cy="7.9" r="1.6" stroke-width="1.1"/></svg><b>详情</b></span>
</div>
</div>
<div class="pg">
<span class="total">共 35648 条</span>
<span class="pi arrow" style="left:1354px"><svg width="12" height="12" viewBox="0 0 12 12" fill="none" stroke="currentColor" stroke-width="1.3"><path d="M8.1 1.9 3.9 6 8.1 10.1"/></svg></span>
<span class="pi" style="left:1393px;width:32px">1</span>
<span class="pi" style="left:1433px;width:32px">2</span>
<span class="pi" style="left:1473px;width:32px">3</span>
<span class="pi on" style="left:1513px;width:32px">4</span>
<span class="pi" style="left:1553px;width:32px">5</span>
<span class="pi" style="left:1593px;width:32px">6</span>
<span class="pi" style="left:1633px;width:32px">···</span>
<span class="pi" style="left:1672px;width:50px">3565</span>
<span class="pi arrow" style="left:1729px"><svg width="12" height="12" viewBox="0 0 12 12" fill="none" stroke="currentColor" stroke-width="1.3"><path d="M3.9 1.9 8.1 6 3.9 10.1"/></svg></span>
<span class="psel"><span class="pst">10 条/页</span><svg class="psa" width="12" height="12" viewBox="0 0 12 12" fill="none" stroke="currentColor" stroke-width="1.3"><path d="M1.9 3.6 6 7.7 10.1 3.6"/></svg></span>
</div>
</div>
<div class="foot">Copyright © 2022-present Charles7c · v1.3.0-SNAPSHOT · 津ICP备2022005864号-2</div>
</div>
</body></html>
